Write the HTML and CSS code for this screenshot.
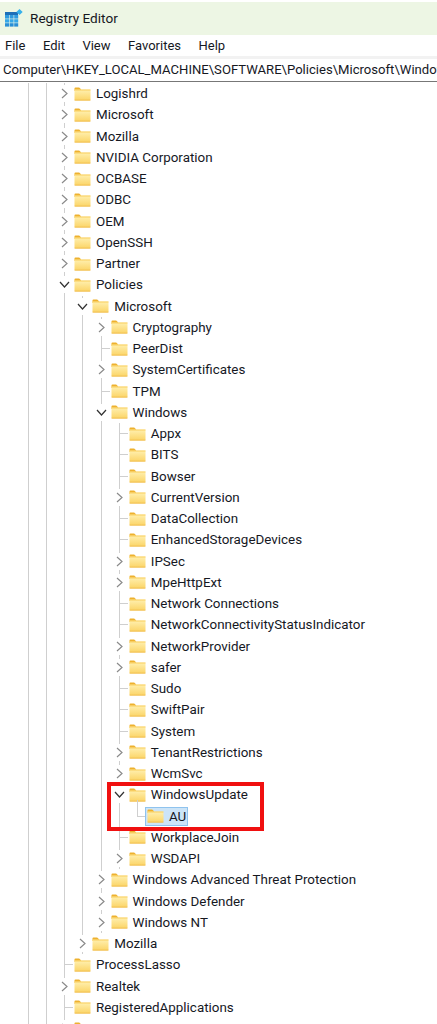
FILE: index.html
```html
<!DOCTYPE html>
<html lang="en">
<head>
<meta charset="utf-8">
<title>Registry Editor</title>
<link rel="stylesheet" href="styles.css">
</head>
<body>
<svg class="defs" width="0" height="0" aria-hidden="true">
  <defs>
    <linearGradient id="fg" x1="0" y1="0" x2="0" y2="1"><stop offset="0" stop-color="#fff0b0"/><stop offset="1" stop-color="#fbd466"/></linearGradient>
    <symbol id="folder" viewBox="0 0 17 14">
      <path d="M0.5 2V1.2C0.5 .7 .9 .4 1.4 .4H5.2L7 2.2V4H0.5Z" fill="#eeb12e"/>
      <path d="M0.5 2.6H16.5V12.6C16.5 13.2 16.1 13.5 15.6 13.5H1.4C.9 13.5 .5 13.2 .5 12.6Z" fill="url(#fg)"/>
      <path d="M0.5 2.6H16.5V3.4H0.5Z" fill="#f7c64a"/>
      <path d="M0.5 12.7H16.5V13.5H0.5Z" fill="#eeb84a"/>
    </symbol>
    <symbol id="closed" viewBox="0 0 9 11"><path d="M2 1l5 4.500L2 10" fill="none" stroke="#8a8a8a" stroke-width="1.2"/></symbol>
    <symbol id="open" viewBox="0 0 11 9"><path d="M1 2l4.500 5L10 2" fill="none" stroke="#333" stroke-width="1.2"/></symbol>
  </defs>
</svg>
<div class="titlebar">
  <svg class="appicon" viewBox="0 0 18 18" width="18" height="18" aria-hidden="true">
    <path d="M0 3h13v3H0z" fill="#1d6fb8"/>
    <rect x="0" y="6" width="4" height="3.6" fill="#2e9be0"/><rect x="4.600" y="6" width="4" height="3.6" fill="#2e9be0"/><rect x="9.200" y="6" width="4" height="3.6" fill="#2e9be0"/>
    <rect x="0" y="10.200" width="4" height="3.4" fill="#35a7e8"/><rect x="4.600" y="10.200" width="4" height="3.4" fill="#35a7e8"/><rect x="9.200" y="10.200" width="4" height="3.4" fill="#35a7e8"/>
    <rect x="0" y="14.200" width="4" height="3.4" fill="#2a8fd6"/><rect x="4.600" y="14.200" width="4" height="3.4" fill="#2a8fd6"/><rect x="9.200" y="14.200" width="4" height="3.4" fill="#2a8fd6"/>
    <path d="M14.500 0l3.200 3-3.200 3-3.200-3z" fill="#37b0ea"/>
  </svg>
  <span class="title">Registry Editor</span>
</div>
<nav class="menu"><span>File</span><span>Edit</span><span>View</span><span>Favorites</span><span>Help</span></nav>
<div class="address">Computer\HKEY_LOCAL_MACHINE\SOFTWARE\Policies\Microsoft\Windows\WindowsUpdate\AU</div>
<main class="tree">
 <div class="group g0"><div class="group g1"><div class="group g2">
  <div class="row"><svg class="chev"><use href="#closed"/></svg><svg class="fld"><use href="#folder"/></svg><span class="lbl">Logishrd</span></div>
  <div class="row"><svg class="chev"><use href="#closed"/></svg><svg class="fld"><use href="#folder"/></svg><span class="lbl">Microsoft</span></div>
  <div class="row"><svg class="chev"><use href="#closed"/></svg><svg class="fld"><use href="#folder"/></svg><span class="lbl">Mozilla</span></div>
  <div class="row"><svg class="chev"><use href="#closed"/></svg><svg class="fld"><use href="#folder"/></svg><span class="lbl">NVIDIA Corporation</span></div>
  <div class="row"><svg class="chev"><use href="#closed"/></svg><svg class="fld"><use href="#folder"/></svg><span class="lbl">OCBASE</span></div>
  <div class="row"><svg class="chev"><use href="#closed"/></svg><svg class="fld"><use href="#folder"/></svg><span class="lbl">ODBC</span></div>
  <div class="row"><svg class="chev"><use href="#closed"/></svg><svg class="fld"><use href="#folder"/></svg><span class="lbl">OEM</span></div>
  <div class="row"><svg class="chev"><use href="#closed"/></svg><svg class="fld"><use href="#folder"/></svg><span class="lbl">OpenSSH</span></div>
  <div class="row"><svg class="chev"><use href="#closed"/></svg><svg class="fld"><use href="#folder"/></svg><span class="lbl">Partner</span></div>
  <div class="row"><svg class="chev o"><use href="#open"/></svg><svg class="fld"><use href="#folder"/></svg><span class="lbl">Policies</span></div>
  <div class="group">
   <div class="row"><svg class="chev o"><use href="#open"/></svg><svg class="fld"><use href="#folder"/></svg><span class="lbl">Microsoft</span></div>
   <div class="group">
    <div class="row"><svg class="chev"><use href="#closed"/></svg><svg class="fld"><use href="#folder"/></svg><span class="lbl">Cryptography</span></div>
    <div class="row leaf"><svg class="fld"><use href="#folder"/></svg><span class="lbl">PeerDist</span></div>
    <div class="row"><svg class="chev"><use href="#closed"/></svg><svg class="fld"><use href="#folder"/></svg><span class="lbl">SystemCertificates</span></div>
    <div class="row leaf"><svg class="fld"><use href="#folder"/></svg><span class="lbl">TPM</span></div>
    <div class="row"><svg class="chev o"><use href="#open"/></svg><svg class="fld"><use href="#folder"/></svg><span class="lbl">Windows</span></div>
    <div class="group">
     <div class="row leaf"><svg class="fld"><use href="#folder"/></svg><span class="lbl">Appx</span></div>
     <div class="row leaf"><svg class="fld"><use href="#folder"/></svg><span class="lbl">BITS</span></div>
     <div class="row leaf"><svg class="fld"><use href="#folder"/></svg><span class="lbl">Bowser</span></div>
     <div class="row"><svg class="chev"><use href="#closed"/></svg><svg class="fld"><use href="#folder"/></svg><span class="lbl">CurrentVersion</span></div>
     <div class="row leaf"><svg class="fld"><use href="#folder"/></svg><span class="lbl">DataCollection</span></div>
     <div class="row leaf"><svg class="fld"><use href="#folder"/></svg><span class="lbl">EnhancedStorageDevices</span></div>
     <div class="row"><svg class="chev"><use href="#closed"/></svg><svg class="fld"><use href="#folder"/></svg><span class="lbl">IPSec</span></div>
     <div class="row"><svg class="chev"><use href="#closed"/></svg><svg class="fld"><use href="#folder"/></svg><span class="lbl">MpeHttpExt</span></div>
     <div class="row leaf"><svg class="fld"><use href="#folder"/></svg><span class="lbl">Network Connections</span></div>
     <div class="row leaf"><svg class="fld"><use href="#folder"/></svg><span class="lbl">NetworkConnectivityStatusIndicator</span></div>
     <div class="row"><svg class="chev"><use href="#closed"/></svg><svg class="fld"><use href="#folder"/></svg><span class="lbl">NetworkProvider</span></div>
     <div class="row"><svg class="chev"><use href="#closed"/></svg><svg class="fld"><use href="#folder"/></svg><span class="lbl">safer</span></div>
     <div class="row leaf"><svg class="fld"><use href="#folder"/></svg><span class="lbl">Sudo</span></div>
     <div class="row leaf"><svg class="fld"><use href="#folder"/></svg><span class="lbl">SwiftPair</span></div>
     <div class="row leaf"><svg class="fld"><use href="#folder"/></svg><span class="lbl">System</span></div>
     <div class="row"><svg class="chev"><use href="#closed"/></svg><svg class="fld"><use href="#folder"/></svg><span class="lbl">TenantRestrictions</span></div>
     <div class="row"><svg class="chev"><use href="#closed"/></svg><svg class="fld"><use href="#folder"/></svg><span class="lbl">WcmSvc</span></div>
     <div class="row"><svg class="chev o"><use href="#open"/></svg><svg class="fld"><use href="#folder"/></svg><span class="lbl">WindowsUpdate</span></div>
     <div class="group nolin">
      <div class="row elbow selected"><svg class="fld"><use href="#folder"/></svg><span class="lbl">AU</span></div>
     </div>
     <div class="row leaf"><svg class="fld"><use href="#folder"/></svg><span class="lbl">WorkplaceJoin</span></div>
     <div class="row"><svg class="chev"><use href="#closed"/></svg><svg class="fld"><use href="#folder"/></svg><span class="lbl">WSDAPI</span></div>
    </div>
    <div class="row"><svg class="chev"><use href="#closed"/></svg><svg class="fld"><use href="#folder"/></svg><span class="lbl">Windows Advanced Threat Protection</span></div>
    <div class="row"><svg class="chev"><use href="#closed"/></svg><svg class="fld"><use href="#folder"/></svg><span class="lbl">Windows Defender</span></div>
    <div class="row"><svg class="chev"><use href="#closed"/></svg><svg class="fld"><use href="#folder"/></svg><span class="lbl">Windows NT</span></div>
   </div>
   <div class="row"><svg class="chev"><use href="#closed"/></svg><svg class="fld"><use href="#folder"/></svg><span class="lbl">Mozilla</span></div>
  </div>
  <div class="row leaf"><svg class="fld"><use href="#folder"/></svg><span class="lbl">ProcessLasso</span></div>
  <div class="row"><svg class="chev"><use href="#closed"/></svg><svg class="fld"><use href="#folder"/></svg><span class="lbl">Realtek</span></div>
  <div class="row leaf"><svg class="fld"><use href="#folder"/></svg><span class="lbl">RegisteredApplications</span></div>
  <div class="row"><svg class="chev"><use href="#closed"/></svg><svg class="fld"><use href="#folder"/></svg><span class="lbl">Romeo</span></div>
 </div></div></div>
 <div class="callout"></div>
</main>
</body>
</html>
```
FILE: styles.css
```css
html, body { margin: 0; padding: 0; background: #fff; }
body { width: 437px; height: 1024px; overflow: hidden; font-family: Roboto, "Open Sans", sans-serif; color: #16181f; font-size: 13.400px; }
.defs { position: absolute; }
.titlebar { height: 31px; margin-top: 2px; padding-bottom: 2px; padding-left: 5px; background: #edf6e4; display: flex; align-items: center; }
.appicon { display: block; margin-right: 7px; }
.title { font-size: 13.600px; }
.menu { height: 21px; display: flex; gap: 17.500px; padding-left: 5px; align-items: center; font-size: 13px; background: #fff; }
.address { height: 23px; margin-top: 3px; padding-left: 3px; line-height: 22px; white-space: nowrap; overflow: hidden; font-size: 13.100px; border-bottom: 1px solid #777; box-sizing: border-box; background: #fff; box-shadow: 0 -3px 0 #f2f2f2; }
.tree { position: relative; padding-top: 1px; height: 942px; overflow: hidden; }
.group { margin-left: 17.250px; border-left: 1px solid #cfcfcf; }
.g0 { margin-left: 28px; }
.g1 { margin-left: 17px; }
.g2 { margin-left: 17px; }
.nolin { border-left-color: transparent; }
.row { height: 21.250px; display: flex; align-items: center; padding-left: 9px; position: relative; white-space: nowrap; }
.chev { position: absolute; left: -5px; top: 2px; width: 9px; height: 17px; background: #fff; }
.chev.o { left: -6px; width: 11px; }
.fld { width: 17px; height: 14px; flex: none; }
.lbl { margin-left: 5px; }
.leaf::before { content: ""; position: absolute; left: 0; top: 10px; width: 8px; border-top: 1px solid #cfcfcf; }
.elbow::before { content: ""; position: absolute; left: -1px; top: -6px; width: 7px; height: 16px; border-left: 1px solid #cfcfcf; border-bottom: 1px solid #cfcfcf; }
.selected { width: max-content; padding-right: 2px; }
.selected::after { content: ""; position: absolute; left: 7px; right: 0; top: 1px; bottom: 1px; background: #cce4f7; border: 1px solid #8fc3ee; }
.selected .fld, .selected .lbl { position: relative; z-index: 1; }
.callout { position: absolute; left: 107px; top: 700px; width: 157px; height: 49px; box-sizing: border-box; border: 4px solid #f01010; pointer-events: none; }
```
